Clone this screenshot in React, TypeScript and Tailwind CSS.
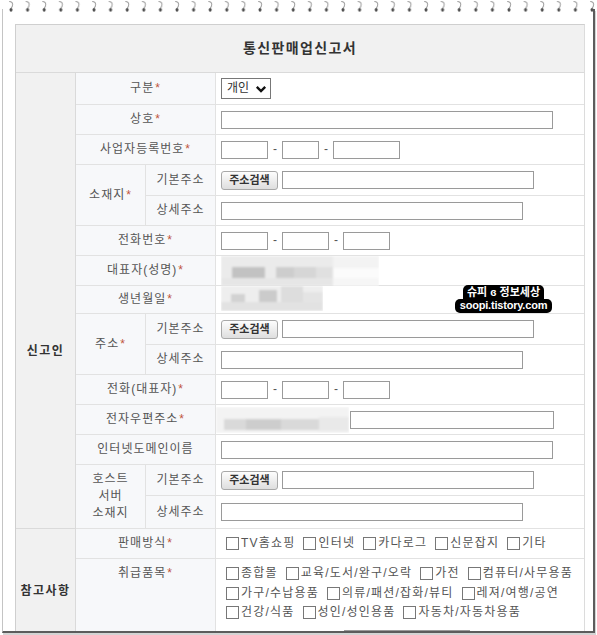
import React from 'react';

/**
 * 통신판매업신고서 양식 캡처 재현
 * - 스프링 노트 프레임 + 회색 테두리
 * - 신고인 / 참고사항 두 구역의 표
 */

const Req: React.FC = () => <span className="ml-[1px] text-[#c0543c]">*</span>;

const Box: React.FC<{ w: string }> = ({ w }) => (
  <input readOnly className={`h-[18px] border border-[#9a9a9a] bg-white ${w}`} />
);

// 주소검색 버튼
const SearchBtn: React.FC = () => (
  <button className="h-[19px] w-[57px] rounded-[3px] border border-[#a8a8a8] bg-gradient-to-b from-[#fdfdfd] to-[#dedede] text-[11px] font-bold leading-none tracking-normal text-[#333]">
    주소검색
  </button>
);

const Dash: React.FC = () => <span className="w-[14px] text-center text-[12px] tracking-normal text-[#555]">-</span>;

const BizNo: React.FC = () => (
  <div className="flex items-center">
    <Box w="w-[47px]" />
    <Dash />
    <Box w="w-[37px]" />
    <Dash />
    <Box w="w-[67px]" />
  </div>
);

const Phone: React.FC = () => (
  <div className="flex items-center">
    <Box w="w-[47px]" />
    <Dash />
    <Box w="w-[47px]" />
    <Dash />
    <Box w="w-[47px]" />
  </div>
);

const Check: React.FC<{ label: string }> = ({ label }) => (
  <span className="mr-[8px] inline-flex items-center tracking-[1.2px]">
    <span className="mr-[2px] h-[13px] w-[13px] shrink-0 border border-[#777] bg-white" />
    {label}
  </span>
);

// 모자이크 처리된 부분
const Mosaic: React.FC<{ w: number; h: number; blocks: [number, number, number, number, string][] }> = ({ w, h, blocks }) => (
  <svg width={w} height={h} className="shrink-0">
    <defs>
      <filter id={`bl${w}${h}`}>
        <feGaussianBlur stdDeviation="0.8" />
      </filter>
    </defs>
    <g filter={`url(#bl${w}${h})`}>
      {blocks.map(([x, y, bw, bh, c], i) => (
        <rect key={i} x={x} y={y} width={bw} height={bh} fill={c} />
      ))}
    </g>
  </svg>
);

const Spirals: React.FC = () => (
  <svg width="597" height="14" className="absolute left-0 top-0">
    <defs>
      <pattern id="spiral" x="8" y="0" width="16.6" height="14" patternUnits="userSpaceOnUse">
        <path d="M1.2 1.5 Q4.6 1.6 4.6 4.6 Q4.6 7 3 8" stroke="#9a9a9a" strokeWidth="1" fill="none" />
        <ellipse cx="3" cy="9.8" rx="1.5" ry="1.9" fill="#4f4f4f" />
      </pattern>
    </defs>
    <rect width="597" height="14" fill="url(#spiral)" />
  </svg>
);

const cellG = 'flex justify-center border-r border-b border-[#dadada] bg-[#f1f1f1] text-[12px] font-bold tracking-[1.5px] text-[#333]';
const cellL2 = 'col-span-2 flex items-center justify-center border-r border-b border-[#e2e2e2] bg-[#f7f8fa] tracking-[1px]';
const cellLG = 'row-span-2 flex items-center justify-center border-r border-b border-[#e2e2e2] bg-[#f7f8fa] tracking-[1px]';
const cellLS = 'flex items-center justify-center border-r border-b border-[#e2e2e2] bg-[#f7f8fa] tracking-[1px]';
const cellV = 'flex items-center border-b border-[#e2e2e2] bg-white pl-[5px]';

export default function App() {
  return (
    <div className="relative h-[635px] w-[597px] overflow-hidden bg-white font-['Liberation_Sans','Noto_Sans_CJK_KR',sans-serif] text-[12px] leading-[17px] text-[#555]">
      <div className="ml-[2px] mt-[9px] h-[624px] w-[593px] overflow-hidden border-b-2 border-l border-r-2 border-b-[#5c5c5c] border-l-[#c4c4c4] border-r-[#5c5c5c] pl-[12px] pr-[7px] pt-[15px] shadow-[1px_2px_0_#d4d4d4]">
        <div className="w-[570px] border-l border-r border-t border-l-[#cfcfcf] border-r-[#dcdcdc] border-t-[#cfcfcf]">
          {/* 제목 */}
          <div className="flex h-[48px] items-center justify-center border-b border-[#dadada] bg-[#f1f1f1] text-[14px] font-bold tracking-[1.4px] text-[#333]">
            통신판매업신고서
          </div>

          <div className="grid grid-cols-[60px_70px_70px_1fr] grid-rows-[32px_30px_30px_31px_30px_30px_30px_28px_31px_30px_30px_30px_30px_31px_33px_30px_96px]">
            {/* 신고인 */}
            <div className={`${cellG} row-span-15 items-start pt-[270px]`}>신고인</div>

            <div className={cellL2}>
              구분<Req />
            </div>
            <div className={cellV}>
              <div className="flex h-[21px] w-[50px] items-center justify-between border border-[#777] bg-white pl-[5px] pr-[3px] text-[#333]">
                <span>개인</span>
                <svg width="12" height="12" viewBox="0 0 12 12">
                  <path d="M1.8 3.8 L6 8 L10.2 3.8" stroke="#111" strokeWidth="2.4" fill="none" />
                </svg>
              </div>
            </div>

            <div className={cellL2}>
              상호<Req />
            </div>
            <div className={cellV}>
              <Box w="w-[332px]" />
            </div>

            <div className={cellL2}>
              사업자등록번호<Req />
            </div>
            <div className={cellV}>
              <BizNo />
            </div>

            <div className={cellLG}>
              소재지<Req />
            </div>
            <div className={cellLS}>기본주소</div>
            <div className={`${cellV} gap-[4px]`}>
              <SearchBtn />
              <Box w="w-[252px]" />
            </div>
            <div className={cellLS}>상세주소</div>
            <div className={cellV}>
              <Box w="w-[302px]" />
            </div>

            <div className={cellL2}>
              전화번호<Req />
            </div>
            <div className={cellV}>
              <Phone />
            </div>

            <div className={cellL2}>
              대표자(성명)<Req />
            </div>
            <div className={`${cellV} items-start`}>
              <Mosaic
                w={158}
                h={30}
                blocks={[
                  [0, 0, 112, 30, '#ebebeb'],
                  [112, 0, 46, 12, '#f3f3f3'],
                  [112, 12, 46, 10, '#fbfbfb'],
                  [112, 22, 46, 8, '#f6f6f6'],
                  [11, 11, 33, 11, '#c2c2c2'],
                  [55, 11, 18, 11, '#cdcdcd'],
                  [73, 11, 22, 11, '#d6d6d6'],
                  [95, 11, 17, 11, '#e0e0e0'],
                  [0, 22, 112, 8, '#e6e6e6'],
                ]}
              />
            </div>

            <div className={cellL2}>
              생년월일<Req />
            </div>
            <div className={`${cellV} items-start`}>
              <Mosaic
                w={102}
                h={25}
                blocks={[
                  [0, 0, 102, 25, '#eeeeee'],
                  [10, 8, 14, 14, '#d2d2d2'],
                  [38, 4, 18, 18, '#cbcbcb'],
                  [60, 0, 22, 16, '#dddddd'],
                  [82, 6, 20, 14, '#e4e4e4'],
                  [0, 16, 102, 9, '#e2e2e2'],
                ]}
              />
            </div>

            <div className={cellLG}>
              주소<Req />
            </div>
            <div className={cellLS}>기본주소</div>
            <div className={`${cellV} gap-[4px]`}>
              <SearchBtn />
              <Box w="w-[252px]" />
            </div>
            <div className={cellLS}>상세주소</div>
            <div className={cellV}>
              <Box w="w-[302px]" />
            </div>

            <div className={cellL2}>
              전화(대표자)<Req />
            </div>
            <div className={cellV}>
              <Phone />
            </div>

            <div className={cellL2}>
              전자우편주소<Req />
            </div>
            <div className="flex items-center border-b border-[#e2e2e2] bg-white">
              <Mosaic
                w={133}
                h={26}
                blocks={[
                  [0, 0, 133, 26, '#f3f3f3'],
                  [8, 12, 95, 11, '#d9d9d9'],
                  [30, 12, 35, 11, '#cdcdcd'],
                  [103, 10, 30, 14, '#e9e9e9'],
                ]}
              />
              <Box w="w-[204px] ml-[1px]" />
            </div>

            <div className={cellL2}>인터넷도메인이름</div>
            <div className={cellV}>
              <Box w="w-[332px]" />
            </div>

            <div className={`${cellLG} flex-col`}>
              <span>호스트</span>
              <span>서버</span>
              <span>소재지</span>
            </div>
            <div className={cellLS}>기본주소</div>
            <div className={`${cellV} gap-[4px]`}>
              <SearchBtn />
              <Box w="w-[252px]" />
            </div>
            <div className={cellLS}>상세주소</div>
            <div className={cellV}>
              <Box w="w-[302px]" />
            </div>

            {/* 참고사항 */}
            <div className={`${cellG} row-span-2 items-center`}>참고사항</div>

            <div className={cellL2}>
              판매방식<Req />
            </div>
            <div className={`${cellV} pl-[10px]`}>
              <Check label="TV홈쇼핑" />
              <Check label="인터넷" />
              <Check label="카다로그" />
              <Check label="신문잡지" />
              <Check label="기타" />
            </div>

            <div className={`${cellL2} items-start pt-[6px]`}>
              취급품목<Req />
            </div>
            <div className="flex flex-col border-b border-[#e2e2e2] bg-white pl-[10px] pt-[5px] leading-[19.5px]">
              <div className="flex items-center whitespace-nowrap">
                <Check label="종합몰" />
                <Check label="교육/도서/완구/오락" />
                <Check label="가전" />
                <Check label="컴퓨터/사무용품" />
              </div>
              <div className="flex items-center whitespace-nowrap">
                <Check label="가구/수납용품" />
                <Check label="의류/패션/잡화/뷰티" />
                <Check label="레져/여행/공연" />
              </div>
              <div className="flex items-center whitespace-nowrap">
                <Check label="건강/식품" />
                <Check label="성인/성인용품" />
                <Check label="자동차/자동차용품" />
              </div>
              <div className="mt-[7px] flex items-center pl-[17px] tracking-[1.2px]">
                <span className="mr-[20px]">상품기타</span>
                <span className="mr-[8px]">기타</span>
                <Box w="w-[126px]" />
              </div>
            </div>
          </div>
        </div>
      </div>

      <Spirals />

      {/* 블로그 워터마크 */}
      <div className="absolute left-[455px] top-[285px] flex w-[97px] flex-col items-center font-['Liberation_Sans','Noto_Sans_CJK_KR',sans-serif] text-[11px] font-bold leading-[13px] text-white">
        <span className="rounded-t-[5px] bg-black px-[4px] pt-[1px]">슈피 ɞ 정보세상</span>
        <span className="w-full rounded-[5px] bg-black pb-[1px] text-center tracking-[-0.2px]">soopi.tistory.com</span>
      </div>
    </div>
  );
}
